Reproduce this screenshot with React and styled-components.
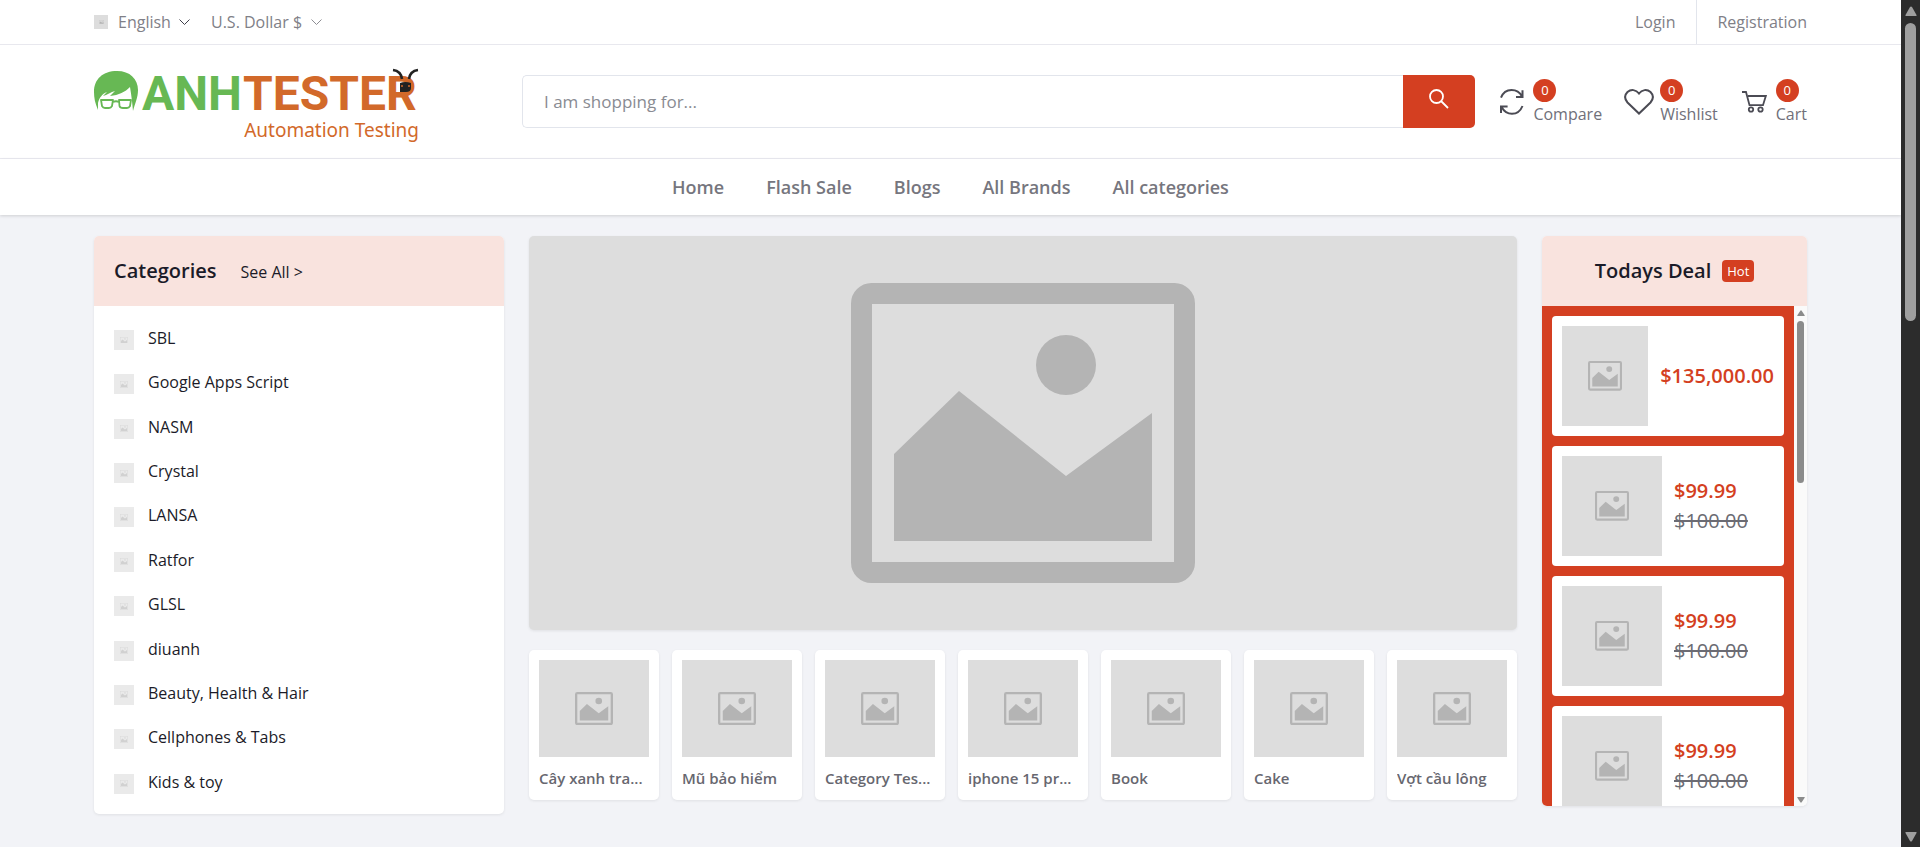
import React from "react";
import styled, { createGlobalStyle } from "styled-components";

const RED = "#d43f21";
const SOFT = "#f9e3de";
const DARK = "#1b1b28";
const GREEN = "#67b854";
const ORANGE = "#d2692a";

const GlobalStyle = createGlobalStyle`
  *, *::before, *::after { box-sizing: border-box; }
  body {
    margin: 0;
    background: #f2f3f7;
    color: ${DARK};
    font: 400 16px/24px "Open Sans", "Noto Sans", sans-serif;
  }
  a { color: inherit; text-decoration: none; }
  ul, h2, p { margin: 0; padding: 0; }
  ul { list-style: none; }
  svg { display: block; }
`;

const Screen = styled.div`
  display: grid;
  grid-template-columns: minmax(0, 1fr) 19px;
  height: 100vh;
`;

const Page = styled.div`
  min-width: 0;
  overflow: hidden;
`;

const Container = styled.div`
  display: flex;
  align-items: center;
  padding: 0 94px;
`;

const TopBar = styled.div`
  background: #fff;
  border-bottom: 1px solid #e8e8ee;
`;

const TopRow = styled(Container)`
  height: 44px;
  justify-content: space-between;
  color: #808087;
`;

const TopGroup = styled.div`
  display: flex;
  align-items: center;
  align-self: stretch;
  gap: ${(p) => p.$gap || 0}px;
`;

const Picker = styled.label`
  display: flex;
  align-items: center;
  gap: 8px;
`;

const Flag = styled.span`
  padding-right: 2px;
`;

const PickerSelect = styled.select`
  appearance: none;
  border: 0;
  padding: 0;
  margin: 0;
  background: none;
  color: inherit;
  font: inherit;
`;

const TopLink = styled.a`
  display: flex;
  align-items: center;
  align-self: stretch;
  padding-left: 20px;

  & + & { border-left: 1px solid #e2e5ec; }
  &:first-child { padding-right: 21px; }
`;

const Header = styled.header`
  background: #fff;
  border-bottom: 1px solid #ebebf2;
`;

const HeaderRow = styled(Container)`
  height: 113px;
  gap: 22px;
`;

const LogoLink = styled.a`
  flex: 0 0 406px;
  padding-top: 9px;
`;

const Wordmark = styled.span`
  position: relative;
  display: flex;
  gap: 1px;
  width: fit-content;
  font-family: Roboto, sans-serif;
  font-size: 48px;
  font-weight: 700;
  line-height: 48px;
`;

const WordPart = styled.span`
  color: ${(p) => p.$color};
`;

const Ant = styled.svg`
  position: absolute;
  top: -2px;
  right: -2px;
`;

const Tagline = styled.span`
  display: block;
  width: 325px;
  color: ${ORANGE};
  font-family: "Noto Sans", sans-serif;
  font-size: 19px;
  line-height: 24px;
  text-align: right;
`;

const SearchForm = styled.form`
  display: flex;
  flex: 1;
  height: 53px;
  min-width: 0;
`;

const SearchInput = styled.input`
  flex: 1;
  min-width: 0;
  padding: 0 21px;
  border: 1px solid #e2e5ec;
  border-right: 0;
  border-radius: 5px 0 0 5px;
  background: #fff;
  color: ${DARK};
  font: inherit;
  font-size: 17px;

  &::placeholder { color: #898b92; opacity: 1; }
`;

const SearchButton = styled.button`
  display: flex;
  align-items: center;
  justify-content: center;
  width: 72px;
  padding: 0 0 6px;
  border: 0;
  border-radius: 0 5px 5px 0;
  background: ${RED};
`;

const Action = styled.a`
  display: flex;
  align-items: center;
  gap: 6px;
  color: #70707a;
`;

const ActionIcon = styled.span`
  display: flex;
  justify-content: center;
  width: 30px;
  color: #4b4b54;
`;

const ActionText = styled.span`
  display: flex;
  flex-direction: column;
  align-items: flex-start;
  padding-top: 2px;
`;

const Count = styled.span`
  width: 23px;
  height: 23px;
  border-radius: 50%;
  background: ${RED};
  color: #fff;
  font-size: 13px;
  line-height: 23px;
  text-align: center;
`;

const Nav = styled.nav`
  display: flex;
  justify-content: center;
  gap: 42px;
  padding: 16px 0;
  background: #fff;
  box-shadow: 0 1px 3px rgba(0, 0, 0, 0.15);
  color: #76767e;
  font-size: 18px;
  font-weight: 600;
  line-height: 24px;
`;

const Main = styled.main`
  display: grid;
  grid-template-columns: 410px minmax(0, 1fr) 265px;
  align-items: start;
  gap: 25px;
  padding: 21px 94px;
`;

const Panel = styled.section`
  overflow: hidden;
  border-radius: 5px;
  background: #fff;
  box-shadow: 0 1px 3px rgba(0, 0, 0, 0.08);
`;

const PanelHead = styled.div`
  display: flex;
  align-items: ${(p) => (p.$center ? "center" : "baseline")};
  justify-content: ${(p) => (p.$center ? "center" : "flex-start")};
  gap: ${(p) => (p.$center ? 11 : 24)}px;
  height: 70px;
  padding: 20px;
  background: ${SOFT};
`;

const PanelTitle = styled.h2`
  font-size: 20px;
  font-weight: 600;
  line-height: 30px;
`;

const HotBadge = styled.span`
  padding: 0 5px;
  border-radius: 4px;
  background: ${RED};
  color: #fff;
  font-size: 13px;
  line-height: 22px;
`;

const CategoryList = styled.ul`
  display: grid;
  grid-auto-rows: 1fr;
  height: 508px;
  padding: 10px 20px;
`;

const CategoryLink = styled.a`
  display: flex;
  align-items: flex-start;
  gap: 14px;
  padding-top: 10px;
`;

const Thumb = styled.span`
  display: flex;
  flex: 0 ${(p) => (p.$shrink ? 1 : 0)} ${(p) => p.$w}px;
  align-items: center;
  justify-content: center;
  width: ${(p) => p.$w}px;
  min-width: 0;
  height: ${(p) => p.$h}px;
  overflow: hidden;
  background: #ddd;
  opacity: ${(p) => (p.$faded ? 0.6 : 1)};
`;

const CategoryThumb = styled(Thumb)`
  margin-top: 4px;
`;

const Center = styled.div`
  display: grid;
  gap: 20px;
`;

const Hero = styled(Panel)`
  display: flex;
  align-items: center;
  justify-content: center;
  height: 394px;
  background: #ddd;
`;

const CardRow = styled.ul`
  display: grid;
  grid-template-columns: repeat(7, minmax(0, 1fr));
  gap: 13px;
`;

const Card = styled.li`
  height: 150px;
  padding: 10px;
  border-radius: 5px;
  background: #fff;
  box-shadow: 0 1px 3px rgba(0, 0, 0, 0.08);
`;

const CardThumb = styled(Thumb)`
  width: 100%;
`;

const CardName = styled.p`
  overflow: hidden;
  padding-top: 9px;
  color: #67676f;
  font-size: 15px;
  font-weight: 600;
  text-overflow: ellipsis;
  white-space: nowrap;
`;

const DealViewport = styled.div`
  display: grid;
  grid-template-columns: minmax(0, 1fr) 13px;
  height: 500px;
  overflow: hidden;
`;

const DealList = styled.ul`
  display: grid;
  grid-template-columns: minmax(0, 1fr);
  gap: 10px;
  padding: 10px;
  background: ${RED};
`;

const Deal = styled.li`
  display: flex;
  align-items: center;
  gap: 12px;
  height: 120px;
  padding: 10px;
  border-radius: 4px;
  background: #fff;
`;

const Prices = styled.div`
  display: flex;
  flex: none;
  flex-direction: column;
  font-size: 20px;
  line-height: 30px;
  white-space: nowrap;
`;

const Price = styled.span`
  color: ${RED};
  font-weight: 600;
`;

const OldPrice = styled.del`
  color: #6b6b73;
`;

const Track = styled.div`
  display: flex;
  flex-direction: column;
  align-items: center;
  justify-content: space-between;
  height: ${(p) => (p.$page ? "100vh" : "500px")};
  padding: ${(p) => (p.$page ? "6px 0 5px" : "4px 0 3px")};
  background: ${(p) => (p.$page ? "#2c2c2c" : "#fafafa")};
  color: ${(p) => (p.$page ? "#9f9f9f" : "#8b8b8b")};
`;

const TrackTop = styled.div`
  display: grid;
  justify-items: center;
  gap: ${(p) => (p.$page ? 7 : 5)}px;
`;

const TrackThumb = styled.div`
  width: ${(p) => (p.$page ? 11 : 7)}px;
  height: ${(p) => (p.$page ? 298 : 162)}px;
  border-radius: 6px;
  background: currentColor;
`;

function TrackArrow({ size, down }) {
  const h = size === 12 ? 10 : 6;
  return (
    <svg width={size} height={h} viewBox="0 0 12 9" preserveAspectRatio="none" aria-hidden="true">
      <path
        d={down ? "M1 0H11Q12 0 11.5 1L7 8Q6 9 5 8L.5 1Q0 0 1 0Z" : "M1 9H11Q12 9 11.5 8L7 1Q6 0 5 1L.5 8Q0 9 1 9Z"}
        fill="currentColor"
      />
    </svg>
  );
}

function ScrollTrack({ page }) {
  const size = page ? 12 : 8;
  return (
    <Track $page={page} aria-hidden="true">
      <TrackTop $page={page}>
        <TrackArrow size={size} />
        <TrackThumb $page={page} />
      </TrackTop>
      <TrackArrow size={size} down />
    </Track>
  );
}

const Picture = styled.svg`
  flex: none;
`;

function Placeholder({ width }) {
  return (
    <Picture width={width} viewBox="0 0 344 300" aria-hidden="true">
      <rect x="10.5" y="10.5" width="323" height="279" rx="10" fill="none" stroke="#b4b4b4" strokeWidth="21" />
      <circle cx="215" cy="82" r="30" fill="#b4b4b4" />
      <path d="M43 171 108 108 215 193 301 130V258H43Z" fill="#b4b4b4" />
    </Picture>
  );
}

function Chevron({ color }) {
  return (
    <svg width="11" height="7" viewBox="0 0 11 7" fill="none" stroke={color} aria-hidden="true">
      <path d="M.5.5 5.5 5.5 10.5.5" />
    </svg>
  );
}

function Logo() {
  return (
    <>
      <Wordmark>
        <svg width="47" height="42" viewBox="0 5 47 42" aria-hidden="true">
          <path
            d="M4 45C1 38 0 33 0 27 0 14 9 6 23 6 36 6 44 14 44 25 44 33 41 38 39 46L38 36Q37 28 36 22C31 27 25 30 16 31L21 26C17 27 13 30 9 31L13 27C8 29 5 33 4 38Z"
            fill={GREEN}
          />
          <g fill="none" stroke={GREEN} strokeWidth="1.8" strokeLinejoin="round">
            <path d="M7 35H19L18 41Q17 43 15 43H11Q9 43 8 41ZM25 35H37L36 41Q35 43 33 43H29Q26 43 25.5 41Z" />
            <path d="M19 37Q22 35.5 25 37" />
          </g>
        </svg>
        <WordPart $color={GREEN}>ANH</WordPart>
        <WordPart $color={ORANGE}>TESTER</WordPart>
        <Ant width="27" height="25" viewBox="295 3 27 25" aria-hidden="true">
          <path d="M296 5Q304 6 305 14M321 5Q313 6 312 14" fill="none" stroke="#222" strokeWidth="2.6" />
          <path d="M303 18Q308 16 314 18V23Q314 27 309 27H303Z" fill="#222" />
          <circle cx="305" cy="21" r="1" fill={ORANGE} />
          <circle cx="312" cy="21" r="1" fill={ORANGE} />
        </Ant>
      </Wordmark>
      <Tagline>Automation Testing</Tagline>
    </>
  );
}

function SearchIcon() {
  return (
    <svg width="20" height="20" viewBox="0 0 20 20" fill="none" stroke="#fff" strokeWidth="1.8" aria-hidden="true">
      <circle cx="7.5" cy="7.5" r="6.5" />
      <path d="M12 12 19 19" />
    </svg>
  );
}

const icons = {
  compare: (
    <svg width="24" height="26" viewBox="0 0 24 26" fill="none" stroke="currentColor" strokeWidth="2">
      <path d="M1 8.7C3 3.5 7 1 11.5 1 16 1 20 3.5 22 7.5M22.5 1.2V8H16" />
      <path d="M22.5 17C20.5 22 17 24.8 12 24.8 7.5 24.8 4 22.5 1.5 18M1 24V17.5H7.6" />
    </svg>
  ),
  heart: (
    <svg width="30" height="26" viewBox="0 0 30 26" fill="none" stroke="currentColor" strokeWidth="2">
      <path d="M15 4.5C12 .5 7 0 3.5 3 .5 6 .5 10 3.5 13.5L15 24.5 26.5 13.5C29.5 10 29.5 6 26.5 3 23 0 18 .5 15 4.5Z" />
    </svg>
  ),
  cart: (
    <svg width="25" height="22" viewBox="0 0 25 22" fill="none" stroke="currentColor" strokeWidth="1.8">
      <path d="M0 1H4L7.5 14.2H21L23.8 5H6" />
      <circle cx="9" cy="18.5" r="2.2" />
      <circle cx="18.5" cy="18.5" r="2.2" />
    </svg>
  ),
};

const actions = [
  ["compare", "Compare"],
  ["heart", "Wishlist"],
  ["cart", "Cart"],
];
const navItems = ["Home", "Flash Sale", "Blogs", "All Brands", "All categories"];
const categories = [
  "SBL", "Google Apps Script", "NASM", "Crystal", "LANSA", "Ratfor", "GLSL", "diuanh",
  "Beauty, Health & Hair", "Cellphones & Tabs", "Kids & toy",
];
const featured = ["Cây xanh tra...", "Mũ bảo hiểm", "Category Tes...", "iphone 15 pr...", "Book", "Cake", "Vợt cầu lông"];
const deals = [
  { price: "$135,000.00" },
  { price: "$99.99", old: "$100.00" },
  { price: "$99.99", old: "$100.00" },
  { price: "$99.99", old: "$100.00" },
];

export default function App() {
  return (
    <Screen>
      <GlobalStyle />
      <Page>
        <TopBar>
          <TopRow>
            <TopGroup $gap={21}>
              <Picker>
                <Flag><Thumb $w={14} $h={14}><Placeholder width={5} /></Thumb></Flag>
                <PickerSelect aria-label="Language"><option>English</option></PickerSelect>
                <Chevron color="#3f3f4a" />
              </Picker>
              <Picker>
                <PickerSelect aria-label="Currency"><option>U.S. Dollar $</option></PickerSelect>
                <Chevron color="#8d8d93" />
              </Picker>
            </TopGroup>
            <TopGroup>
              <TopLink href="#login">Login</TopLink>
              <TopLink href="#registration">Registration</TopLink>
            </TopGroup>
          </TopRow>
        </TopBar>
        <Header>
          <HeaderRow>
            <LogoLink href="#home"><Logo /></LogoLink>
            <SearchForm role="search">
              <SearchInput type="text" aria-label="Search products" placeholder="I am shopping for..." />
              <SearchButton type="submit" aria-label="Search"><SearchIcon /></SearchButton>
            </SearchForm>
            {actions.map(([icon, label]) => (
              <Action key={icon} href={`#${icon}`}>
                <ActionIcon>{icons[icon]}</ActionIcon>
                <ActionText><Count>0</Count>{label}</ActionText>
              </Action>
            ))}
          </HeaderRow>
        </Header>
        <Nav>
          {navItems.map((n) => <a key={n} href="#nav">{n}</a>)}
        </Nav>
        <Main>
          <Panel>
            <PanelHead>
              <PanelTitle>Categories</PanelTitle>
              <a href="#all">See All &gt;</a>
            </PanelHead>
            <CategoryList>
              {categories.map((c) => (
                <li key={c}>
                  <CategoryLink href="#category">
                    <CategoryThumb $w={20} $h={20} $faded><Placeholder width={8} /></CategoryThumb>
                    {c}
                  </CategoryLink>
                </li>
              ))}
            </CategoryList>
          </Panel>
          <Center>
            <Hero><Placeholder width={344} /></Hero>
            <CardRow>
              {featured.map((f) => (
                <Card key={f}>
                  <a href="#featured">
                    <CardThumb $w={110} $h={97}><Placeholder width={38} /></CardThumb>
                    <CardName>{f}</CardName>
                  </a>
                </Card>
              ))}
            </CardRow>
          </Center>
          <Panel>
            <PanelHead $center>
              <PanelTitle>Todays Deal</PanelTitle>
              <HotBadge>Hot</HotBadge>
            </PanelHead>
            <DealViewport>
              <DealList>
                {deals.map((d, i) => (
                  <Deal key={i}>
                    <Thumb $w={100} $h={100} $shrink><Placeholder width={34} /></Thumb>
                    <Prices>
                      <Price>{d.price}</Price>
                      {d.old && <OldPrice>{d.old}</OldPrice>}
                    </Prices>
                  </Deal>
                ))}
              </DealList>
              <ScrollTrack />
            </DealViewport>
          </Panel>
        </Main>
      </Page>
      <ScrollTrack page />
    </Screen>
  );
}
